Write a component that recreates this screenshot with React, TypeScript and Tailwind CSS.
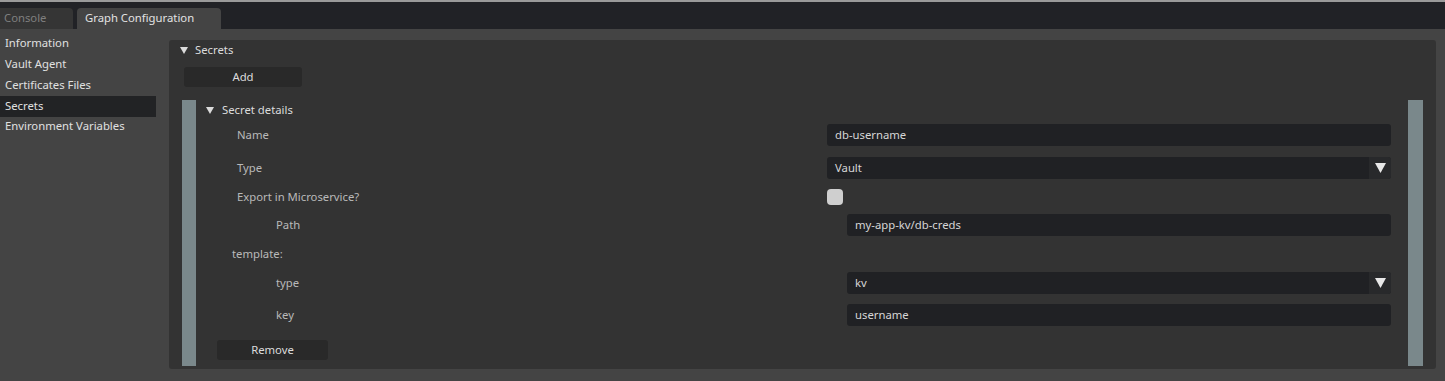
import React from "react";

const font = { fontFamily: '"Noto Sans", "Open Sans", sans-serif' };

function Tri({ className = "" }: { className?: string }) {
  return (
    <svg width="8" height="7" viewBox="0 0 8 7" className={className}>
      <path d="M0 0 H8 L4 7 Z" fill="#dcdcdc" />
    </svg>
  );
}

function TextField({ value, nested }: { value: string; nested?: boolean }) {
  return (
    <div
      className={`flex h-[22px] items-center rounded-[3px] bg-[#202124] px-[8px] text-[#d6d6d6] ${
        nested ? "w-[544px]" : "w-[564px]"
      }`}
    >
      {value}
    </div>
  );
}

function SelectField({ value, nested }: { value: string; nested?: boolean }) {
  return (
    <div
      className={`flex h-[22px] items-center overflow-hidden rounded-[3px] bg-[#202124] pl-[8px] text-[#d6d6d6] ${
        nested ? "w-[544px]" : "w-[564px]"
      }`}
    >
      <span className="flex-1">{value}</span>
      <div className="flex h-full w-[22px] items-center justify-center bg-[#28292b]">
        <svg width="11" height="10" viewBox="0 0 11 10">
          <path d="M0 0 H11 L5.5 10 Z" fill="#e8e8e8" />
        </svg>
      </div>
    </div>
  );
}

function Row({
  label,
  indent,
  className = "",
  children,
}: {
  label: string;
  indent: string;
  className?: string;
  children?: React.ReactNode;
}) {
  return (
    <div className={`flex items-center ${className}`}>
      <span className={`flex-1 text-[#b9b9b9] ${indent}`}>{label}</span>
      {children}
    </div>
  );
}

export default function App() {
  const nav = ["Information", "Vault Agent", "Certificates Files", "Secrets", "Environment Variables"];
  return (
    <div className="h-[381px] w-[1445px] overflow-hidden bg-[#444444] text-[11.3px]" style={font}>
      <div className="h-[2px] bg-[#9a9a9a]" />
      <div className="flex h-[27px] items-end gap-[4px] bg-[#212226]">
        <div className="flex h-[21px] w-[73px] items-center rounded-tr-[4px] bg-[#353535] pl-[4px] text-[#7f7f7f]">
          Console
        </div>
        <div className="flex h-[21px] w-[144px] items-center rounded-t-[4px] bg-[#444444] pl-[8px] text-[#e2e2e2]">
          Graph Configuration
        </div>
      </div>

      <div className="flex">
        <div className="w-[156px] pt-[4.5px]">
          {nav.map((item) => (
            <div
              key={item}
              className={`flex h-[20.75px] items-center pl-[5px] text-[#e0e0e0] ${
                item === "Secrets" ? "bg-[#222325]" : ""
              }`}
            >
              {item}
            </div>
          ))}
        </div>

        <div className="ml-[13px] mt-[11px] h-[329px] w-[1267px] rounded-[3px] bg-[#333333] pl-[13px] pr-[13px]">
          <div className="flex h-[20px] items-center gap-[7px] text-[#dcdcdc]">
            <Tri className="-ml-[2px]" />
            <span>Secrets</span>
          </div>
          <div className="ml-[2px] mt-[7px] flex h-[20px] w-[118px] items-center justify-center rounded-[3px] bg-[#292929] text-[#dcdcdc]">
            Add
          </div>

          <div className="mt-[13px] flex h-[266px]">
            <div className="w-[14px] bg-[#7a888b]" />
            <div className="flex flex-1 flex-col">
              <div className="flex h-[20px] items-center gap-[8px] pl-[10px] text-[#dcdcdc]">
                <Tri />
                <span>Secret details</span>
              </div>
              <Row label="Name" indent="pl-[41px]" className="mt-[4px] pr-[17px]">
                <TextField value="db-username" />
              </Row>
              <Row label="Type" indent="pl-[41px]" className="mt-[11px] pr-[17px]">
                <SelectField value="Vault" />
              </Row>
              <Row label="Export in Microservice?" indent="pl-[41px]" className="mt-[10px] h-[16px] pr-[17px]">
                <div className="mr-[548px] h-[16px] w-[16px] rounded-[4px] bg-[#cfcfcf]" />
              </Row>
              <Row label="Path" indent="pl-[80px]" className="mt-[9px] pr-[17px]">
                <TextField value="my-app-kv/db-creds" nested />
              </Row>
              <Row label="template:" indent="pl-[36px]" className="mt-[8px] h-[20px]" />
              <Row label="type" indent="pl-[80px]" className="mt-[8px] pr-[17px]">
                <SelectField value="kv" nested />
              </Row>
              <Row label="key" indent="pl-[80px]" className="mt-[10px] pr-[17px]">
                <TextField value="username" nested />
              </Row>
              <div className="ml-[21px] mt-[14px] flex h-[20px] w-[111px] items-center justify-center rounded-[3px] bg-[#292929] text-[#dcdcdc]">
                Remove
              </div>
            </div>
            <div className="w-[15px] bg-[#7a888b]" />
          </div>
        </div>
      </div>
    </div>
  );
}
